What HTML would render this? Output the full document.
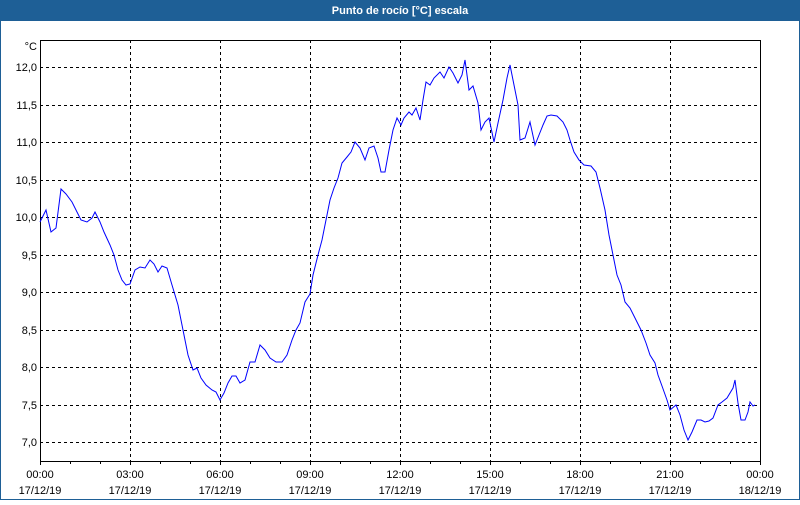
<!DOCTYPE html>
<html><head><meta charset="utf-8"><style>
body{margin:0;width:800px;height:500px;overflow:hidden;background:#fff;font-family:"Liberation Sans",sans-serif}
</style></head><body>
<svg width="800" height="500" xmlns="http://www.w3.org/2000/svg" font-family="Liberation Sans, sans-serif" font-size="11">
<rect x="0" y="0" width="800" height="500" fill="#1e5f96"/>
<rect x="1" y="21" width="798" height="478" fill="#fff"/>
<text x="400" y="14" fill="#fff" font-weight="bold" text-anchor="middle" font-size="11">Punto de rocío [°C] escala</text>
<g stroke="#000" stroke-dasharray="3,3" stroke-width="1">
<path d="M130.5 40V461M220.5 40V461M310.5 40V461M400.5 40V461M490.5 40V461M580.5 40V461M670.5 40V461"/>
<path d="M40 67.5H760M40 105.5H760M40 142.5H760M40 180.5H760M40 217.5H760M40 255.5H760M40 292.5H760M40 330.5H760M40 367.5H760M40 405.5H760M40 442.5H760"/>
</g>
<rect x="40.5" y="40.5" width="720" height="421" fill="none" stroke="#000"/>
<path stroke="#000" d="M40.5 461v4M70.5 461v3M100.5 461v3M130.5 461v4M160.5 461v3M190.5 461v3M220.5 461v4M250.5 461v3M280.5 461v3M310.5 461v4M340.5 461v3M370.5 461v3M400.5 461v4M430.5 461v3M460.5 461v3M490.5 461v4M520.5 461v3M550.5 461v3M580.5 461v4M610.5 461v3M640.5 461v3M670.5 461v4M700.5 461v3M730.5 461v3M760.5 461v4"/>
<g text-anchor="end" fill="#000">
<text x="37" y="50">°C</text>
<text x="37" y="71">12,0</text><text x="37" y="109">11,5</text><text x="37" y="146">11,0</text><text x="37" y="184">10,5</text><text x="37" y="221">10,0</text><text x="37" y="259">9,5</text><text x="37" y="296">9,0</text><text x="37" y="334">8,5</text><text x="37" y="371">8,0</text><text x="37" y="409">7,5</text><text x="37" y="446">7,0</text>
</g>
<g text-anchor="middle" fill="#000">
<text x="40" y="478">00:00</text><text x="40" y="494">17/12/19</text>
<text x="130" y="478">03:00</text><text x="130" y="494">17/12/19</text>
<text x="220" y="478">06:00</text><text x="220" y="494">17/12/19</text>
<text x="310" y="478">09:00</text><text x="310" y="494">17/12/19</text>
<text x="400" y="478">12:00</text><text x="400" y="494">17/12/19</text>
<text x="490" y="478">15:00</text><text x="490" y="494">17/12/19</text>
<text x="580" y="478">18:00</text><text x="580" y="494">17/12/19</text>
<text x="670" y="478">21:00</text><text x="670" y="494">17/12/19</text>
<text x="760" y="478">00:00</text><text x="760" y="494">18/12/19</text>
</g>
<polyline fill="none" stroke="#0000ff" stroke-width="1" points="40,222 46,210 51,232 56,228 61,189 66,194 72,202 77,212 81,220 87,222 92,218 95,212 100,222 104,232 110,245 114,255 118,270 122,280 126,285 130,284 135,270 140,267 145,268 150,260 154,264 158,272 162,266 167,268 172,285 178,305 183,330 188,355 193,370 197,368 201,378 206,385 212,390 216,392 220,400 224,393 228,383 232,376 236,376 240,383 245,380 250,362 255,362 260,345 265,350 270,358 276,362 282,362 287,355 292,340 296,330 300,323 305,302 310,294 313,275 318,255 322,240 326,220 330,200 334,188 338,178 342,163 347,157 351,152 355,142 360,148 365,160 369,148 374,146 378,158 381,172 385,172 389,150 393,130 397,118 401,125 404,118 409,112 412,115 416,108 420,120 423,100 426,82 430,85 434,78 440,72 444,78 449,67 453,73 458,83 462,75 465,60 469,90 473,86 478,103 481,130 485,122 489,118 494,142 498,123 503,100 507,78 510,65 514,85 518,105 520,140 525,138 530,122 535,145 539,135 543,125 547,116 551,115 557,116 563,122 567,130 570,140 574,152 579,160 584,165 591,166 596,172 600,188 605,210 609,235 613,255 617,275 621,285 625,302 630,308 635,318 641,330 646,343 650,355 655,363 658,375 662,386 667,400 670,410 676,405 680,415 684,430 688,440 692,432 697,420 701,420 705,422 709,421 713,418 718,405 722,402 727,398 733,388 735,380 738,403 741,420 745,420 748,412 750,402 753,406 755,405"/>
</svg>
</body></html>
